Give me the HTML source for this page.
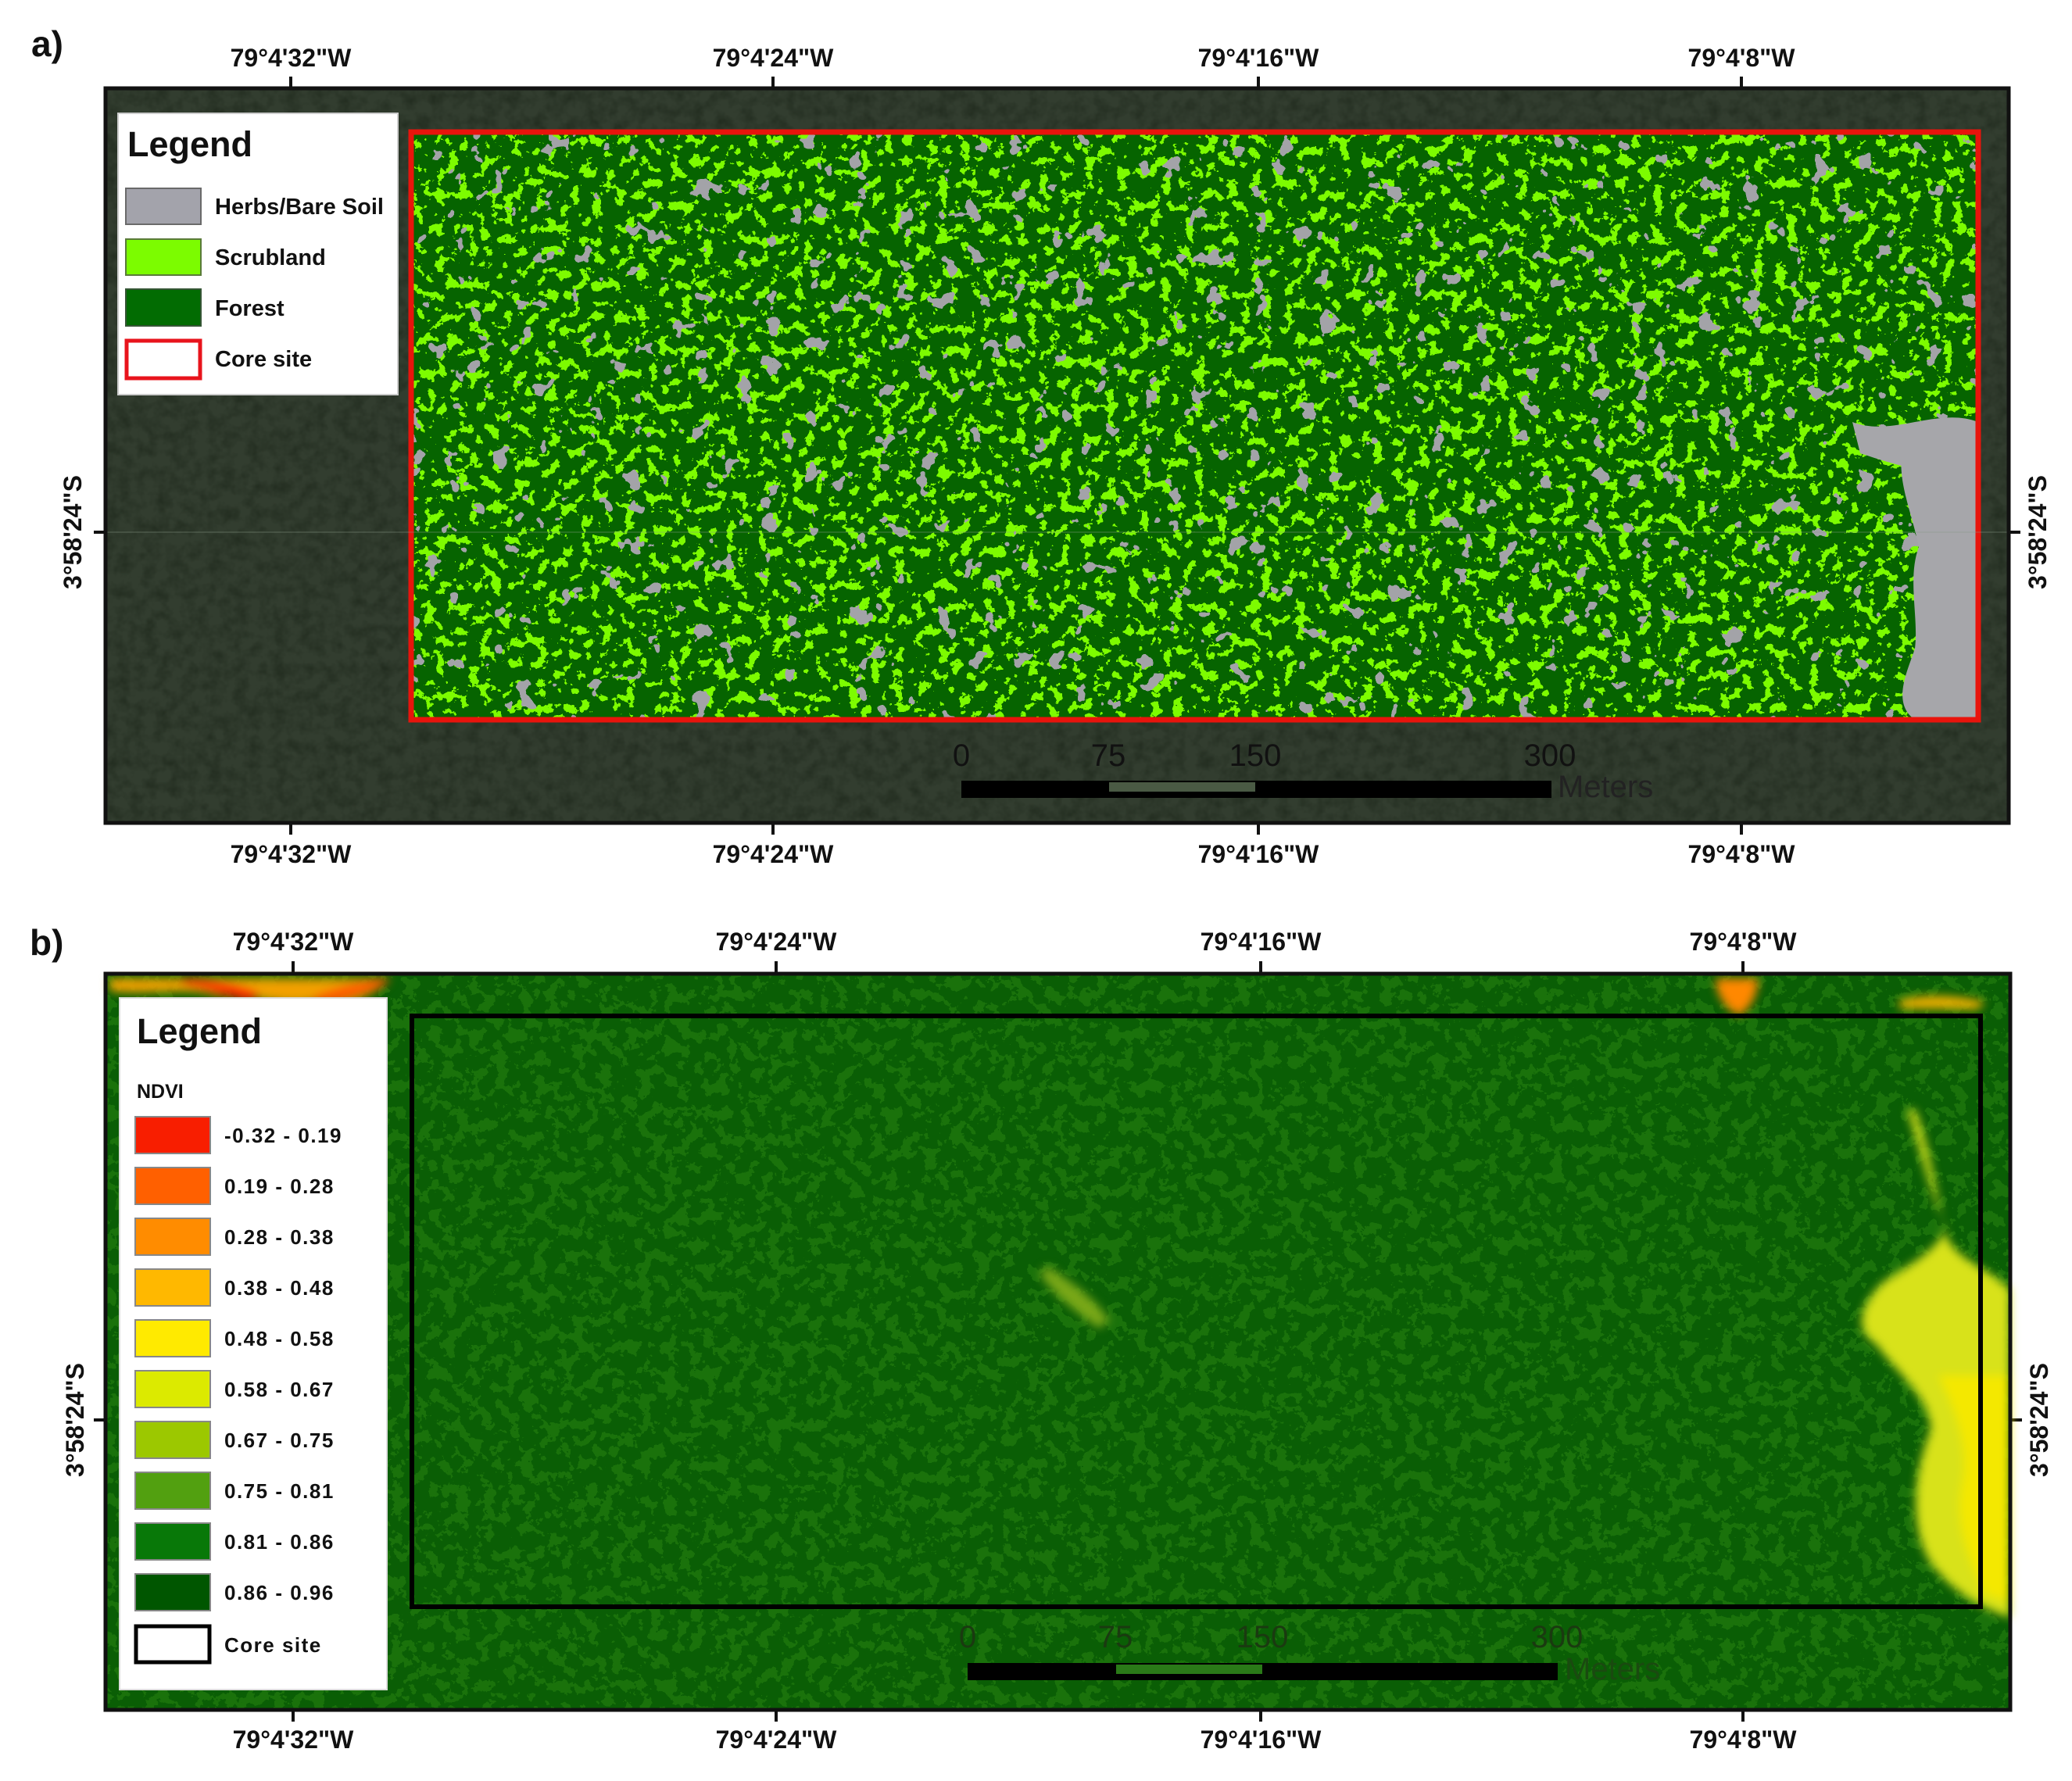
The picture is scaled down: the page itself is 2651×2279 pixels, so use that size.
<!DOCTYPE html>
<html><head><meta charset="utf-8"><style>
html,body{margin:0;padding:0;background:#fff;}
svg{display:block;}
text{font-family:"Liberation Sans",Arial,sans-serif;}
.t{font-weight:bold;font-size:32px;fill:#111;text-anchor:middle;}
.s{font-size:40px;fill:#111;}
filter{color-interpolation-filters:sRGB;}
</style></head><body>
<svg width="2651" height="2279" viewBox="0 0 2651 2279" xmlns="http://www.w3.org/2000/svg">
<defs>
<filter id="sat" x="0" y="0" width="1" height="1" color-interpolation-filters="sRGB">
 <feTurbulence type="fractalNoise" baseFrequency="0.06" numOctaves="3" seed="2"/>
 <feColorMatrix type="matrix" values="0 0 0 0 0.12  0 0 0 0 0.16  0 0 0 0 0.11  0 0 0 -1.4 0.9"/>
</filter>
<filter id="scrub" x="0" y="0" width="1" height="1" color-interpolation-filters="sRGB">
 <feTurbulence type="fractalNoise" baseFrequency="0.07" numOctaves="4" seed="5"/>
 <feColorMatrix type="matrix" values="0 0 0 0 0.49  0 0 0 0 0.99  0 0 0 0 0  1 0 0 0 0"/>
 <feComponentTransfer><feFuncA type="discrete" tableValues="0 0 0 0 0 0 1 1 1 1"/></feComponentTransfer>
</filter>
<filter id="gray" x="0" y="0" width="1" height="1" color-interpolation-filters="sRGB">
 <feTurbulence type="fractalNoise" baseFrequency="0.035" numOctaves="3" seed="11"/>
 <feColorMatrix type="matrix" values="0 0 0 0 0.64  0 0 0 0 0.64  0 0 0 0 0.66  0 1 0 0 0"/>
 <feComponentTransfer><feFuncA type="discrete" tableValues="0 0 0 0 0 0 0 1 1 1"/></feComponentTransfer>
</filter>
<filter id="ndvi" x="0" y="0" width="1" height="1" color-interpolation-filters="sRGB">
 <feTurbulence type="fractalNoise" baseFrequency="0.06" numOctaves="4" seed="7"/>
 <feColorMatrix type="matrix" values="0 0 0 0 0.14  0 0 0 0 0.50  0 0 0 0 0.06  1 0 0 0 0"/>
 <feComponentTransfer><feFuncA type="discrete" tableValues="0 0 0 0 0 0.6 0.6 0.6 0.6"/></feComponentTransfer>
</filter>
<filter id="bl" x="-20%" y="-20%" width="140%" height="140%"><feGaussianBlur stdDeviation="6"/></filter>
</defs>

<!-- ============ PANEL A ============ -->
<text x="40" y="72" style="font-weight:bold;font-size:46px;fill:#111">a)</text>
<g class="t">
<text x="372" y="85">79°4'32"W</text><text x="989" y="85">79°4'24"W</text>
<text x="1610" y="85">79°4'16"W</text><text x="2228" y="85">79°4'8"W</text>
<text x="372" y="1104">79°4'32"W</text><text x="989" y="1104">79°4'24"W</text>
<text x="1610" y="1104">79°4'16"W</text><text x="2228" y="1104">79°4'8"W</text>
</g>
<g stroke="#111" stroke-width="4">
<line x1="372" y1="98" x2="372" y2="113"/><line x1="989" y1="98" x2="989" y2="113"/><line x1="1610" y1="98" x2="1610" y2="113"/><line x1="2228" y1="98" x2="2228" y2="113"/>
<line x1="372" y1="1053" x2="372" y2="1068"/><line x1="989" y1="1053" x2="989" y2="1068"/><line x1="1610" y1="1053" x2="1610" y2="1068"/><line x1="2228" y1="1053" x2="2228" y2="1068"/>
<line x1="120" y1="681" x2="135" y2="681"/><line x1="2570" y1="681" x2="2585" y2="681"/>
</g>
<text class="t" transform="translate(104,681) rotate(-90)">3°58'24"S</text>
<text class="t" transform="translate(2618,681) rotate(-90)">3°58'24"S</text>

<rect x="135" y="113" width="2435" height="940" fill="#323d2f"/>
<rect x="135" y="113" width="2435" height="940" filter="url(#sat)"/>
<!-- classification -->
<rect x="526" y="169" width="2005" height="752" fill="#066400"/>
<rect x="526" y="169" width="2005" height="752" filter="url(#scrub)"/>
<rect x="526" y="169" width="2005" height="752" filter="url(#gray)"/>
<path d="M2440 560 C2470 555 2500 560 2531 565 L2531 921 L2450 921 C2420 900 2440 860 2450 830 C2455 790 2440 740 2455 700 C2445 650 2420 600 2440 560 Z" fill="#a6a6aa"/>
<path d="M2370 540 C2420 560 2480 520 2531 540 L2531 600 C2480 610 2440 600 2380 580 Z" fill="#a6a6aa"/>
<rect x="526" y="169" width="2005" height="752" fill="none" stroke="#e8140c" stroke-width="7"/>
<line x1="135" y1="681" x2="2570" y2="681" stroke="#8a9a88" stroke-width="1" opacity="0.5"/>
<rect x="135" y="113" width="2435" height="940" fill="none" stroke="#111" stroke-width="5"/>

<!-- legend a -->
<rect x="151" y="145" width="358" height="360" fill="#fff" stroke="#ccc" stroke-width="2"/>
<text x="163" y="200" style="font-weight:bold;font-size:45px;fill:#111">Legend</text>
<rect x="161" y="241" width="96" height="46" fill="#a3a3ab" stroke="#6a6a6a" stroke-width="2"/>
<rect x="161" y="306" width="96" height="46" fill="#7cfc00" stroke="#5a7a3a" stroke-width="2"/>
<rect x="161" y="370" width="96" height="47" fill="#026c02" stroke="#355535" stroke-width="2"/>
<rect x="162" y="436" width="94" height="48" fill="#fff" stroke="#e8141c" stroke-width="5"/>
<g style="font-weight:bold;font-size:29px;fill:#111">
<text x="275" y="274">Herbs/Bare Soil</text>
<text x="275" y="339">Scrubland</text>
<text x="275" y="404">Forest</text>
<text x="275" y="469">Core site</text>
</g>

<!-- scale bar a -->
<g class="s" text-anchor="middle">
<text x="1230" y="980">0</text><text x="1418" y="980">75</text><text x="1606" y="980">150</text><text x="1983" y="980">300</text>
</g>
<rect x="1230" y="999" width="755" height="22" fill="#000"/>
<rect x="1419" y="1001" width="187" height="12" fill="#4a5a44"/>
<text x="1993" y="1020" class="s" style="fill:#222">Meters</text>

<!-- ============ PANEL B ============ -->
<text x="38" y="1222" style="font-weight:bold;font-size:46px;fill:#111">b)</text>
<g class="t">
<text x="375" y="1216">79°4'32"W</text><text x="993" y="1216">79°4'24"W</text>
<text x="1613" y="1216">79°4'16"W</text><text x="2230" y="1216">79°4'8"W</text>
<text x="375" y="2237">79°4'32"W</text><text x="993" y="2237">79°4'24"W</text>
<text x="1613" y="2237">79°4'16"W</text><text x="2230" y="2237">79°4'8"W</text>
</g>
<g stroke="#111" stroke-width="4">
<line x1="375" y1="1230" x2="375" y2="1246"/><line x1="993" y1="1230" x2="993" y2="1246"/><line x1="1613" y1="1230" x2="1613" y2="1246"/><line x1="2230" y1="1230" x2="2230" y2="1246"/>
<line x1="375" y1="2188" x2="375" y2="2203"/><line x1="993" y1="2188" x2="993" y2="2203"/><line x1="1613" y1="2188" x2="1613" y2="2203"/><line x1="2230" y1="2188" x2="2230" y2="2203"/>
<line x1="120" y1="1817" x2="135" y2="1817"/><line x1="2572" y1="1817" x2="2587" y2="1817"/>
</g>
<text class="t" transform="translate(107,1817) rotate(-90)">3°58'24"S</text>
<text class="t" transform="translate(2620,1817) rotate(-90)">3°58'24"S</text>

<rect x="135" y="1246" width="2437" height="942" fill="#0a5e05"/>
<rect x="135" y="1246" width="2437" height="942" filter="url(#ndvi)"/>
<!-- red/orange top-left -->
<g filter="url(#bl)">
<path d="M140 1252 L500 1252 C480 1275 440 1290 400 1282 C360 1290 320 1270 280 1275 C240 1262 190 1275 140 1268 Z" fill="#f2a000"/>
<path d="M230 1256 C260 1262 290 1275 320 1282 L330 1272 C300 1262 270 1256 240 1252 Z" fill="#ff2200"/>
<path d="M400 1278 C430 1265 460 1258 500 1252 L490 1262 C460 1272 430 1282 405 1285 Z" fill="#ff5000"/>
<path d="M2195 1252 L2250 1252 C2248 1275 2240 1290 2225 1300 C2205 1290 2195 1270 2195 1252 Z" fill="#ff8800"/>
<path d="M2430 1280 C2470 1270 2510 1275 2540 1282 L2530 1292 C2490 1290 2460 1292 2430 1290 Z" fill="#f0b000"/>
</g>
<!-- yellow zone right -->
<g filter="url(#bl)">
<path d="M2440 1420 C2460 1480 2470 1530 2490 1570 C2480 1600 2440 1620 2410 1640 C2380 1670 2370 1700 2400 1720 C2430 1760 2470 1790 2470 1830 C2450 1880 2440 1950 2470 2000 C2500 2040 2540 2060 2572 2070 L2572 1650 C2540 1620 2500 1610 2490 1580 C2475 1520 2470 1470 2450 1420 Z" fill="#d8e21a"/>
<path d="M2480 1760 C2500 1800 2520 1850 2510 1900 C2500 1950 2520 2000 2540 2040 L2572 2050 L2572 1760 Z" fill="#f4e800"/>
<path d="M1340 1620 C1370 1640 1400 1660 1420 1690 L1405 1700 C1380 1680 1350 1660 1330 1630 Z" fill="#7aa818"/>
</g>
<rect x="527" y="1300" width="2007" height="756" fill="none" stroke="#000" stroke-width="6"/>
<rect x="135" y="1246" width="2437" height="942" fill="none" stroke="#111" stroke-width="5"/>

<!-- legend b -->
<rect x="153" y="1277" width="342" height="885" fill="#fff" stroke="#ddd" stroke-width="2"/>
<text x="175" y="1335" style="font-weight:bold;font-size:45px;fill:#111">Legend</text>
<text x="175" y="1405" style="font-weight:bold;font-size:25px;fill:#111">NDVI</text>
<g stroke="#888" stroke-width="2">
<rect x="173" y="1429" width="96" height="47" fill="#f81e00"/>
<rect x="173" y="1494" width="96" height="47" fill="#ff6000"/>
<rect x="173" y="1559" width="96" height="47" fill="#ff8c00"/>
<rect x="173" y="1624" width="96" height="47" fill="#ffb800"/>
<rect x="173" y="1689" width="96" height="47" fill="#ffea00"/>
<rect x="173" y="1754" width="96" height="47" fill="#dcea00"/>
<rect x="173" y="1819" width="96" height="47" fill="#9cc800"/>
<rect x="173" y="1884" width="96" height="47" fill="#52a010"/>
<rect x="173" y="1949" width="96" height="47" fill="#087808"/>
<rect x="173" y="2014" width="96" height="47" fill="#005600"/>
</g>
<rect x="174" y="2081" width="94" height="46" fill="#fff" stroke="#000" stroke-width="5"/>
<g style="font-weight:bold;font-size:26px;fill:#111;letter-spacing:1.5px">
<text x="287" y="1462">-0.32 - 0.19</text>
<text x="287" y="1527">0.19 - 0.28</text>
<text x="287" y="1592">0.28 - 0.38</text>
<text x="287" y="1657">0.38 - 0.48</text>
<text x="287" y="1722">0.48 - 0.58</text>
<text x="287" y="1787">0.58 - 0.67</text>
<text x="287" y="1852">0.67 - 0.75</text>
<text x="287" y="1917">0.75 - 0.81</text>
<text x="287" y="1982">0.81 - 0.86</text>
<text x="287" y="2047">0.86 - 0.96</text>
<text x="287" y="2114">Core site</text>
</g>

<!-- scale bar b -->
<g class="s" text-anchor="middle" style="fill:#1a3a10">
<text x="1238" y="2108">0</text><text x="1427" y="2108">75</text><text x="1615" y="2108">150</text><text x="1992" y="2108">300</text>
</g>
<rect x="1238" y="2128" width="755" height="22" fill="#000"/>
<rect x="1428" y="2130" width="187" height="12" fill="#2a7a18"/>
<text x="2002" y="2149" class="s" style="fill:#1a4a10">Meters</text>
</svg>
</body></html>
